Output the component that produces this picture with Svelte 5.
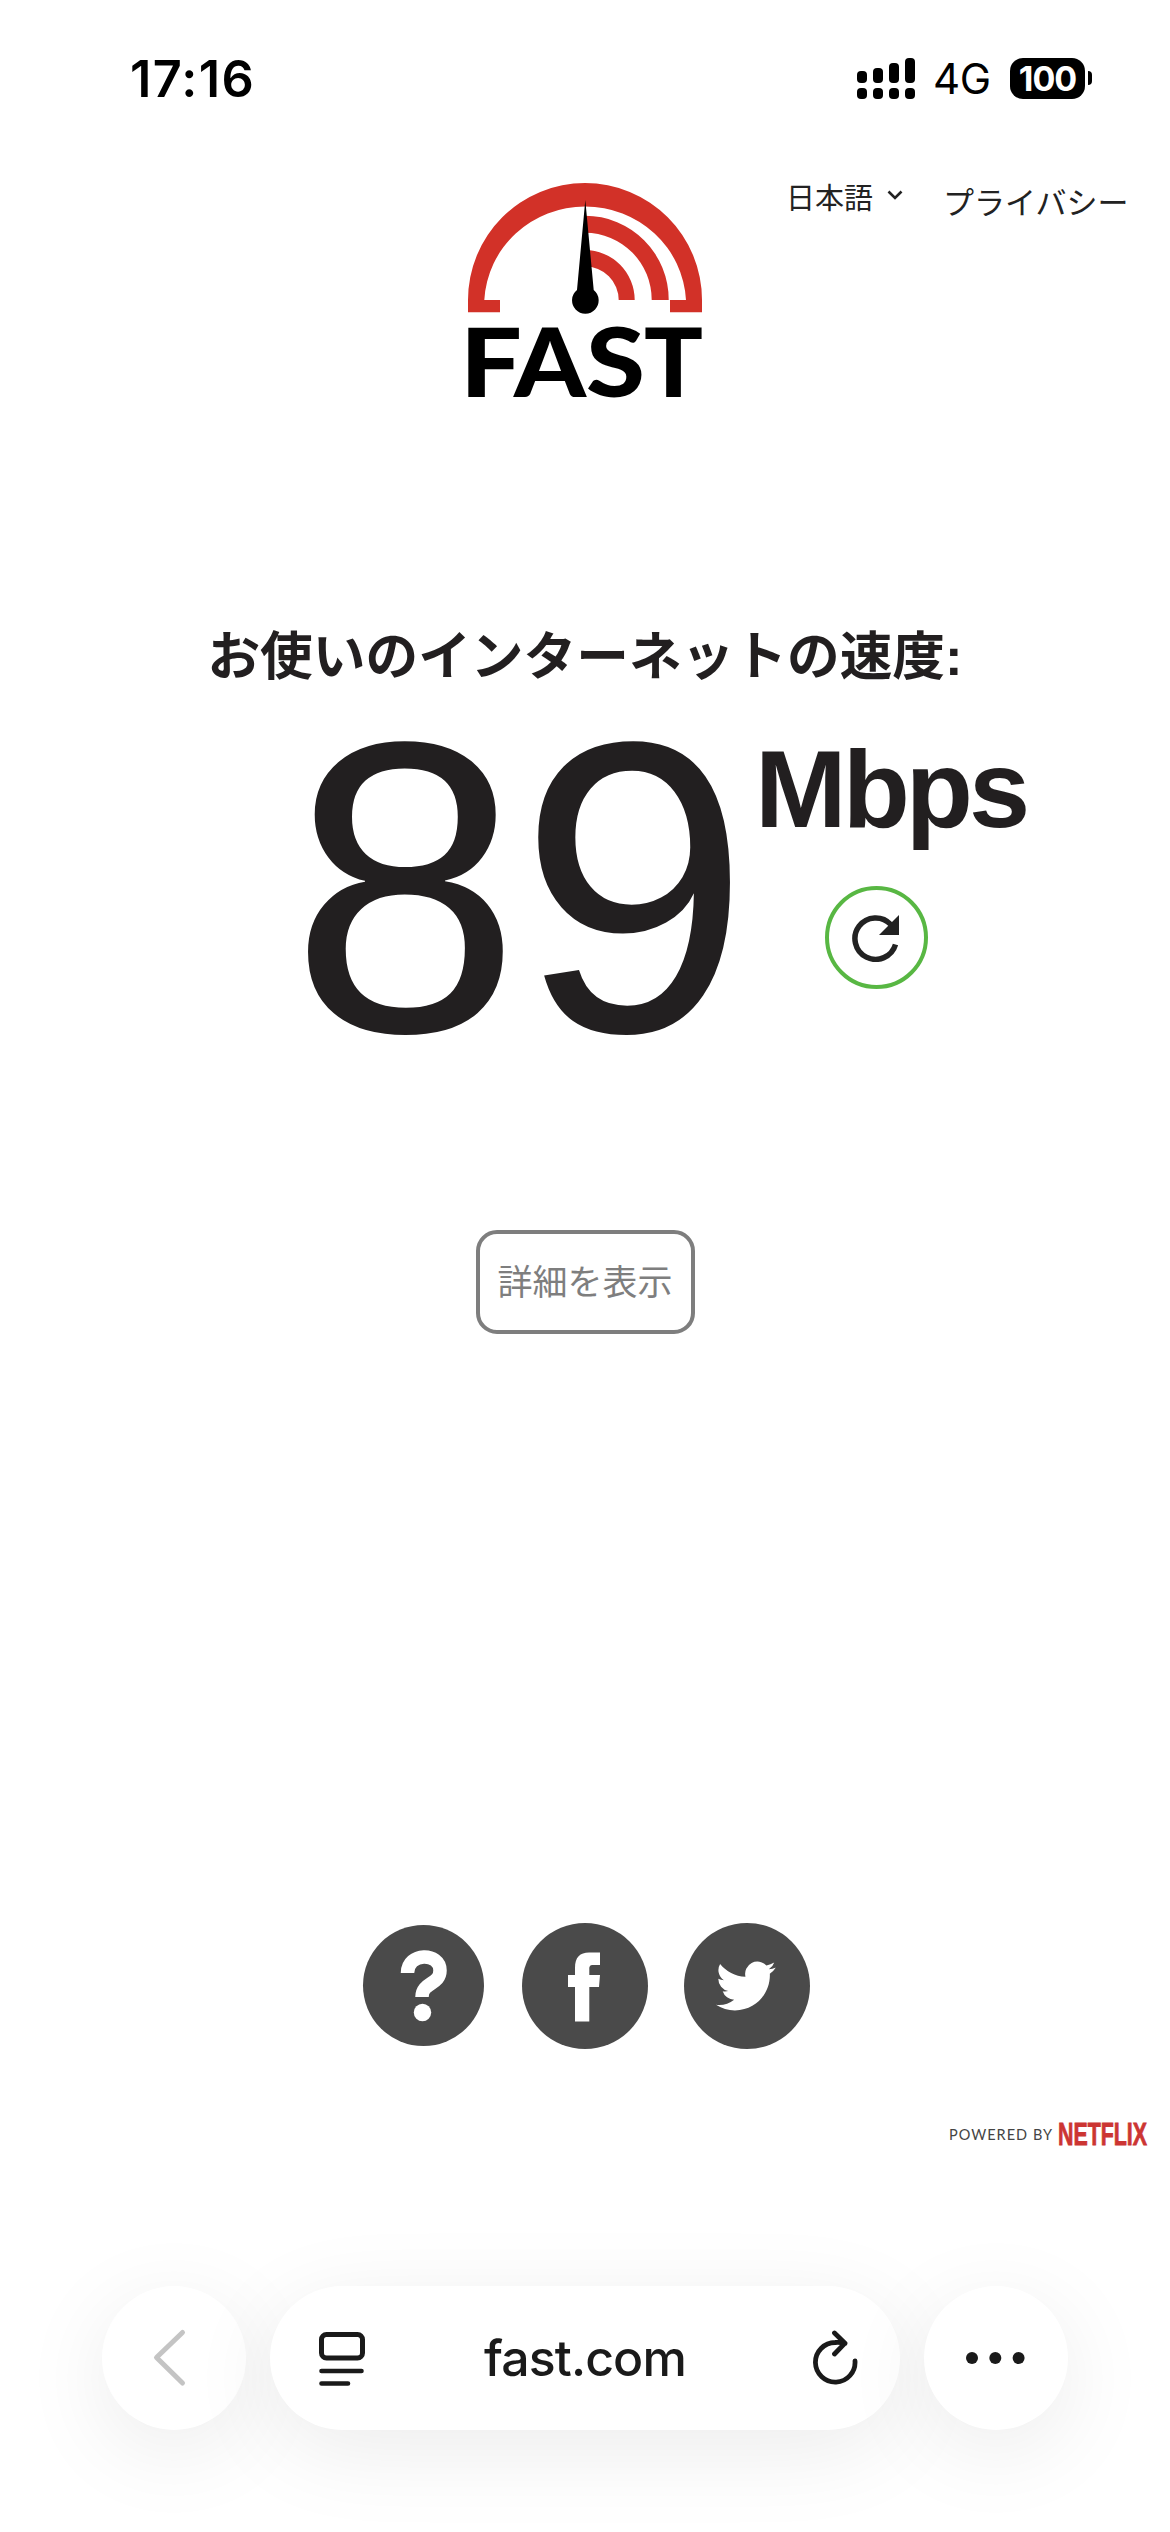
<script>
    const signal = [12, 15, 20, 25]; // bar heights, left to right

    let speed = 89;
    let unit = 'Mbps';
    let address = 'fast.com';
</script>

<div class="screen">
    <div class="status">
        <span class="time">17:16</span>
        <div class="indicators">
            <div class="signal">
                {#each signal as height}
                    <div class="bar">
                        <i style="height: {height}px"></i>
                        <i class="dot"></i>
                    </div>
                {/each}
            </div>
            <span class="network">4G</span>
            <div class="battery"><span>100</span></div>
            <div class="nub"></div>
        </div>
    </div>

    <header>
        <svg class="logo" width="234" height="216" viewBox="0 0 234 216">
            <g fill="#d23128">
                <path d="M0 129.300V117A117 117 0 0 1 234 117V129.300H202V117H218A101 99 0 0 0 16.300 117H32V129.300Z" />
                <path d="M117 32.700A84 84 0 0 1 200.700 117H183.700A67 67 0 0 0 117 49.700Z" />
                <path d="M117 67A50 50 0 0 1 166.700 117H150.700A33.500 33.500 0 0 0 117 83.500Z" />
            </g>
            <path d="M117.300 17L109 107A13.300 13.300 0 1 0 125.700 107Z" />
            <g class="wordmark">
                <text x="-8" y="214" textLength="62" lengthAdjust="spacingAndGlyphs">F</text>
                <text x="46" y="214" textLength="72" lengthAdjust="spacingAndGlyphs">A</text>
                <text x="118" y="214" textLength="59" lengthAdjust="spacingAndGlyphs">S</text>
                <text x="176" y="214" textLength="59" lengthAdjust="spacingAndGlyphs">T</text>
            </g>
        </svg>
        <nav>
            <span class="language">日本語</span>
            <svg class="chevron" width="16" height="12" viewBox="0 0 16 12">
                <path d="M1.500 2.500L8 9L14.500 2.500" fill="none" stroke="#222" stroke-width="2.600" />
            </svg>
            <span class="privacy">プライバシー</span>
        </nav>
    </header>

    <main>
        <h1>お使いのインターネットの速度<span>:</span></h1>
        <div class="result">
            <div class="speed">{speed}</div>
            <div class="side">
                <div class="unit">{unit}</div>
                <button class="again" aria-label="再テスト">
                    <svg width="48" height="48" viewBox="0 0 48 48">
                        <path d="M38.800 10.500A20.700 20.700 0 1 0 43.500 30.500" fill="none" stroke="#222" stroke-width="5.500" />
                        <path d="M47 1V21H27Z" fill="#222" />
                    </svg>
                </button>
            </div>
        </div>
        <button class="details">詳細を表示</button>
    </main>

    <footer>
        <div class="social">
            <a class="help" href="#help" aria-label="ヘルプ">
                <svg width="121" height="121" viewBox="0 0 121 121">
                    <path d="M44.500 48C44.500 27 77 27 77 45.500C77 60 59 57 59 72" fill="none" stroke="#fff" stroke-width="13.500" />
                    <circle cx="59.500" cy="87.500" r="8.700" fill="#fff" />
                </svg>
            </a>
            <a href="#facebook" aria-label="Facebook">
                <svg width="126" height="126" viewBox="0 0 126 126">
                    <path d="M53 98.500V64H46V52H53V45C53 34 58 29.500 67 29.500H78V42H71C68 42 67.300 43.500 67.300 46V52H78L77 64H67.300V98.500Z" fill="#fff" />
                </svg>
            </a>
            <a href="#twitter" aria-label="Twitter">
                <svg width="126" height="126" viewBox="0 0 126 126">
                    <path transform="translate(32 33) scale(2.500)" d="M23.950 4.570a10 10 0 0 1-2.820.770 4.960 4.960 0 0 0 2.160-2.720c-.950.550-2 .950-3.130 1.180a4.920 4.920 0 0 0-8.380 4.480C7.690 8.090 4.070 6.130 1.640 3.160a4.920 4.920 0 0 0 1.520 6.570 4.900 4.900 0 0 1-2.230-.610v.060a4.920 4.920 0 0 0 3.950 4.830 5 5 0 0 1-2.210.080 4.940 4.940 0 0 0 4.600 3.420A9.870 9.870 0 0 1 0 19.540a13.990 13.990 0 0 0 7.550 2.210c9.050 0 14-7.500 14-13.980 0-.210 0-.420-.020-.630a9.940 9.940 0 0 0 2.420-2.570z" fill="#fff" />
                </svg>
            </a>
        </div>
        <div class="powered">
            <svg width="202" height="34" viewBox="0 0 202 34">
                <text class="by" x="2" y="20" textLength="103" lengthAdjust="spacing">POWERED BY</text>
                <text class="netflix" x="111" y="25" textLength="89" lengthAdjust="spacingAndGlyphs">NETFLIX</text>
            </svg>
        </div>
    </footer>

    <div class="toolbar">
        <button class="round" aria-label="戻る">
            <svg width="144" height="144" viewBox="0 0 144 144">
                <path d="M80.500 46.500L54.500 71.500L80.500 97" fill="none" stroke="#c4c4c4" stroke-width="5" stroke-linecap="round" stroke-linejoin="round" />
            </svg>
        </button>
        <div class="address">
            <svg width="48" height="56" viewBox="0 0 48 56" fill="none" stroke="#1a1a1a" stroke-width="5" stroke-linecap="round">
                <rect x="3.500" y="4.500" width="41" height="23.500" rx="5" />
                <path d="M3.500 41H43.500M3.500 53.500H30" stroke-width="4.600" />
            </svg>
            <span>{address}</span>
            <svg width="48" height="56" viewBox="0 0 48 56" fill="none" stroke="#1a1a1a" stroke-width="4.800" stroke-linecap="round" stroke-linejoin="round">
                <path d="M44 31A19.800 19.800 0 1 1 24.200 12.500Q29 12 34 13.500M23.500 3L34 13.200L23.500 24" />
            </svg>
        </div>
        <button class="round" aria-label="その他">
            <svg width="144" height="144" viewBox="0 0 144 144" fill="#1a1a1a">
                <circle cx="48" cy="72" r="6" />
                <circle cx="71.300" cy="72" r="6" />
                <circle cx="94.600" cy="72" r="6" />
            </svg>
        </button>
    </div>
</div>

<style>
    :global(body) {
        background: #fff;
    }

    .screen {
        display: flex;
        flex-direction: column;
        width: 1170px;
        height: 2532px;
        overflow: hidden;
        background: #fff;
        color: #221f20;
        font-family: "Noto Sans CJK JP", sans-serif;
    }

    svg {
        display: block;
        flex: none;
    }

    button {
        padding: 0;
        border: 0;
        background: #fff;
        font-family: inherit;
    }

    .status {
        display: flex;
        justify-content: space-between;
        align-items: center;
        height: 156px;
        padding: 0 78px 0 130px;
        color: #000;
        font-family: Inter, sans-serif;
    }

    .time {
        font-size: 50.500px;
        font-weight: 600;
        letter-spacing: 1.300px;
    }

    .indicators {
        display: flex;
        align-items: center;
    }

    .signal {
        display: flex;
        gap: 6px;
        align-items: flex-end;
        height: 41px;
    }

    .bar i {
        display: block;
        width: 10px;
        border-radius: 4px;
        background: #000;
    }

    .bar .dot {
        height: 11px;
        margin-top: 5px;
    }

    .network {
        width: 58px;
        margin-left: 18px;
        font-size: 42px;
        letter-spacing: -0.5px;
    }

    .battery {
        display: flex;
        justify-content: center;
        align-items: center;
        width: 75px;
        height: 41px;
        margin-left: 19px;
        border-radius: 13px;
        background: #000;
        color: #fff;
        font-size: 34px;
        font-weight: 700;
        letter-spacing: -1px;
    }

    .nub {
        width: 4px;
        height: 14px;
        margin-left: 3px;
        border-radius: 0 6px 6px 0;
        background: #000;
    }

    header {
        display: grid;
        grid-template-columns: 1fr 234px 1fr;
        padding-top: 27px;
    }

    .logo {
        grid-column: 2;
        overflow: visible;
    }

    .wordmark {
        font-family: Lato, sans-serif;
        font-size: 95px;
        font-weight: 900;
    }

    nav {
        display: flex;
        align-items: flex-start;
        padding-left: 84px;
        color: #222;
        white-space: nowrap;
    }

    .language {
        font-size: 29px;
        line-height: 27px;
    }

    .chevron {
        margin: 6px 0 0 14px;
    }

    .privacy {
        margin: 3px 0 0 40px;
        font-size: 31px;
        line-height: 29px;
    }

    main {
        display: flex;
        flex-direction: column;
        align-items: center;
    }

    h1 {
        height: 60px;
        margin: 223px 0 0;
        font-size: 52.700px;
        font-weight: 700;
        line-height: 60px;
        white-space: nowrap;
    }

    h1 span {
        font-family: "Liberation Sans", sans-serif;
        line-height: 1;
    }

    .result {
        display: flex;
        align-self: stretch;
        height: 296px;
        margin-top: 58px;
        padding-left: 290px;
        font-family: "Liberation Sans", sans-serif;
    }

    .speed {
        width: 465px;
        font-size: 415px;
        line-height: 294px;
        letter-spacing: -2px;
    }

    .side {
        display: flex;
        flex-direction: column;
        align-items: center;
        width: 242px;
    }

    .unit {
        align-self: flex-start;
        height: 146px;
        font-size: 110px;
        font-weight: 700;
        line-height: 98px;
        letter-spacing: -4px;
    }

    .again {
        display: flex;
        justify-content: center;
        align-items: center;
        width: 103px;
        height: 103px;
        border: 4.500px solid #58b743;
        border-radius: 50%;
    }

    .details {
        width: 219px;
        height: 104px;
        margin-top: 194px;
        padding-bottom: 6px;
        border: 4px solid #7e7e7e;
        border-radius: 21px;
        color: #7e7e7e;
        font-size: 35px;
    }

    .social {
        display: flex;
        align-items: center;
        justify-content: center;
        gap: 36px;
        margin-top: 589px;
        padding-left: 2px;
    }

    .social a {
        border-radius: 50%;
        background: #4a4a4a;
    }

    .social .help {
        margin: 0 2px 2px 0;
    }

    .powered {
        display: flex;
        justify-content: flex-end;
        margin-top: 71px;
        padding-right: 21px;
    }

    .powered svg {
        overflow: visible;
    }

    .by {
        fill: #444;
        font-family: Lato, sans-serif;
        font-size: 14.500px;
    }

    .netflix {
        fill: #cc3533;
        stroke: #cc3533;
        stroke-width: 0.800px;
        font-family: "Liberation Sans", sans-serif;
        font-size: 31px;
        font-weight: 700;
    }

    .toolbar {
        display: flex;
        justify-content: center;
        gap: 24px;
        margin-top: 132px;
    }

    .round,
    .address {
        height: 144px;
        border-radius: 72px;
        background: #fff;
        box-shadow: 0 20px 90px rgba(0, 0, 0, 0.08);
    }

    .round {
        width: 144px;
    }

    .address {
        display: flex;
        justify-content: space-between;
        align-items: center;
        box-sizing: border-box;
        width: 630px;
        padding: 0 41px 0 48px;
        color: #1a1a1a;
        font-family: Inter, sans-serif;
        font-size: 50px;
        font-weight: 500;
        letter-spacing: -0.900px;
    }

    .address span {
        margin-right: 7px;
    }
</style>
